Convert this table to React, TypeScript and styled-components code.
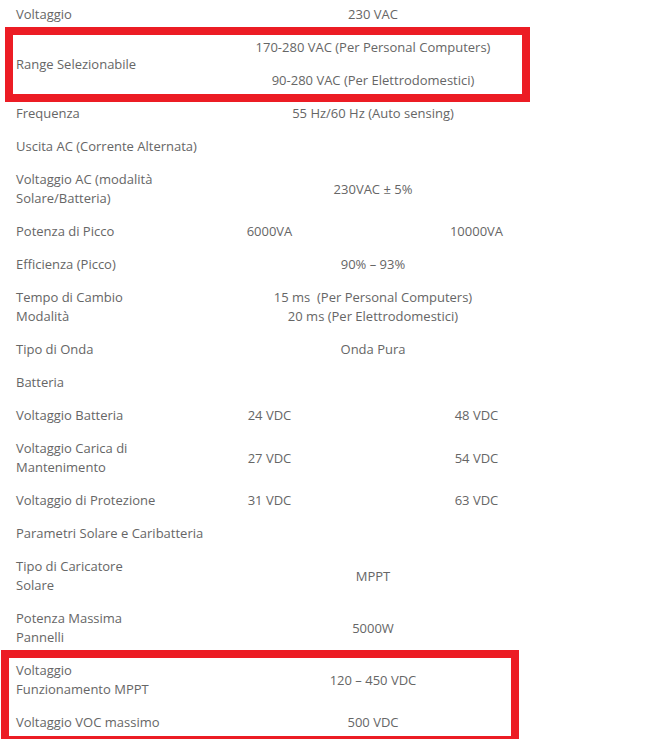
import styled, { createGlobalStyle } from 'styled-components';

const GlobalStyle = createGlobalStyle`
  html, body {
    margin: 0;
    padding: 0;
    background: #ffffff;
  }
  body {
    font-family: 'Open Sans', 'Noto Sans', 'Liberation Sans', sans-serif;
    font-size: 13px;
    color: #666666;
  }
`;

const Table = styled.div`
  display: flex;
  flex-direction: column;
  width: 572px;
  margin: -2px 0 0 8px;
`;

const Row = styled.div`
  display: grid;
  grid-template-columns: 158px 207px 207px;
  align-items: center;
  line-height: 19px;
`;

const Label = styled.div<{ $full?: boolean }>`
  padding: 7px 4px 7px 8px;
  grid-column: ${(p) => (p.$full ? '1 / -1' : 'auto')};
`;

const Value = styled.div<{ $span?: boolean }>`
  padding: 7px 8px;
  text-align: center;
  grid-column: ${(p) => (p.$span ? '2 / 4' : 'auto')};
  display: flex;
  flex-direction: column;
  gap: 14px;
  white-space: pre-line;
`;

const Highlight = styled.div<{ $top: number; $bottom: number; $left: number; $right: number }>`
  position: relative;

  &::after {
    content: '';
    position: absolute;
    top: ${(p) => p.$top}px;
    bottom: ${(p) => p.$bottom}px;
    left: ${(p) => p.$left}px;
    right: ${(p) => p.$right}px;
    border: 8px solid #ec1c24;
    pointer-events: none;
  }
`;

type Spec = {
  label?: string;
  section?: string;
  value?: string[];
  pair?: [string, string];
};

function SpecRow({ label, section, value, pair }: Spec) {
  if (section) {
    return (
      <Row>
        <Label $full>{section}</Label>
      </Row>
    );
  }
  return (
    <Row>
      <Label>{label}</Label>
      {pair ? (
        <>
          <Value>{pair[0]}</Value>
          <Value>{pair[1]}</Value>
        </>
      ) : (
        <Value $span>
          {value?.map((v, i) => (
            <span key={i}>{v}</span>
          ))}
        </Value>
      )}
    </Row>
  );
}

const App = () => {
  return (
    <>
      <GlobalStyle />
      <Table>
        <SpecRow label="Voltaggio" value={['230 VAC']} />
        <Highlight $top={-4} $bottom={-5} $left={-3} $right={50}>
          <SpecRow
            label="Range Selezionabile"
            value={[
              '170-280 VAC (Per Personal Computers)',
              '90-280 VAC (Per Elettrodomestici)',
            ]}
          />
        </Highlight>
        <SpecRow label="Frequenza" value={['55 Hz/60 Hz (Auto sensing)']} />
        <SpecRow section="Uscita AC (Corrente Alternata)" />
        <SpecRow label="Voltaggio AC (modalità Solare/Batteria)" value={['230VAC ± 5%']} />
        <SpecRow label="Potenza di Picco" pair={['6000VA', '10000VA']} />
        <SpecRow label="Efficienza (Picco)" value={['90% – 93%']} />
        <SpecRow
          label="Tempo di Cambio Modalità"
          value={['15 ms\u00a0 (Per Personal Computers)\n20 ms (Per Elettrodomestici)']}
        />
        <SpecRow label="Tipo di Onda" value={['Onda Pura']} />
        <SpecRow section="Batteria" />
        <SpecRow label="Voltaggio Batteria" pair={['24 VDC', '48 VDC']} />
        <SpecRow label="Voltaggio Carica di Mantenimento" pair={['27 VDC', '54 VDC']} />
        <SpecRow label="Voltaggio di Protezione" pair={['31 VDC', '63 VDC']} />
        <SpecRow section="Parametri Solare e Caribatteria" />
        <SpecRow label="Tipo di Caricatore Solare" value={['MPPT']} />
        <SpecRow label="Potenza Massima Pannelli" value={['5000W']} />
        <Highlight $top={-4} $bottom={-5} $left={-7} $right={61}>
          <SpecRow label="Voltaggio Funzionamento MPPT" value={['120 – 450 VDC']} />
          <SpecRow label="Voltaggio VOC massimo" value={['500 VDC']} />
        </Highlight>
      </Table>
    </>
  );
};

export default App;
